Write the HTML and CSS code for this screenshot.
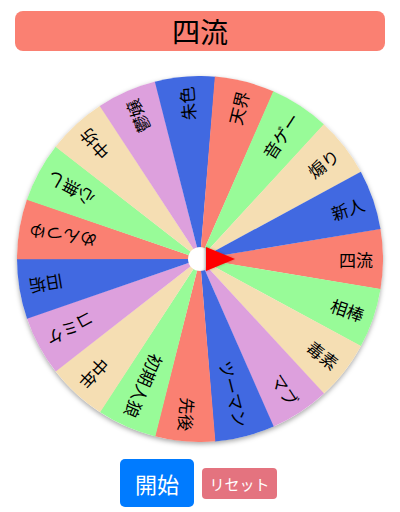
FILE: index.html
```html
<!DOCTYPE html>
<html lang="ja">
<head>
<meta charset="utf-8">
<title>ルーレット</title>
<link rel="stylesheet" href="styles.css">
</head>
<body>
<div class="result">四流</div>
<div class="wheel-area">
  <div class="wheel">
    <svg class="wheel-svg" viewBox="-183 -183 366 366" width="366" height="366">
      <defs>
        <path id="wedge" d="M0 0 L180.46 -30.36 A183 183 0 0 1 180.46 30.36 Z"/>
        <radialGradient id="hub" cx="40%" cy="50%" r="60%">
          <stop offset="0" stop-color="#ffffff"/>
          <stop offset="0.75" stop-color="#ffffff"/>
          <stop offset="1" stop-color="#d8d8d8"/>
        </radialGradient>
        <filter id="ptrshadow" x="-50%" y="-50%" width="200%" height="200%">
          <feDropShadow dx="-1" dy="0" stdDeviation="1.5" flood-color="#000" flood-opacity="0.35"/>
        </filter>
      </defs>
      <g class="segments">
        <use href="#wedge" class="c-salmon" transform="rotate(0)"/>
        <use href="#wedge" class="c-green" transform="rotate(18.947)"/>
        <use href="#wedge" class="c-wheat" transform="rotate(37.895)"/>
        <use href="#wedge" class="c-plum" transform="rotate(56.842)"/>
        <use href="#wedge" class="c-blue" transform="rotate(75.789)"/>
        <use href="#wedge" class="c-salmon" transform="rotate(94.737)"/>
        <use href="#wedge" class="c-green" transform="rotate(113.684)"/>
        <use href="#wedge" class="c-wheat" transform="rotate(132.632)"/>
        <use href="#wedge" class="c-plum" transform="rotate(151.579)"/>
        <use href="#wedge" class="c-blue" transform="rotate(170.526)"/>
        <use href="#wedge" class="c-salmon" transform="rotate(189.474)"/>
        <use href="#wedge" class="c-green" transform="rotate(208.421)"/>
        <use href="#wedge" class="c-wheat" transform="rotate(227.368)"/>
        <use href="#wedge" class="c-plum" transform="rotate(246.316)"/>
        <use href="#wedge" class="c-blue" transform="rotate(265.263)"/>
        <use href="#wedge" class="c-salmon" transform="rotate(284.211)"/>
        <use href="#wedge" class="c-green" transform="rotate(303.158)"/>
        <use href="#wedge" class="c-wheat" transform="rotate(322.105)"/>
        <use href="#wedge" class="c-blue" transform="rotate(341.053)"/>
      </g>
      <g class="labels">
        <text transform="rotate(0)" x="173" y="0">四流</text>
        <text transform="rotate(18.947)" x="173" y="0">相棒</text>
        <text transform="rotate(37.895)" x="173" y="0">毒素</text>
        <text transform="rotate(56.842)" x="173" y="0">マブ</text>
        <text transform="rotate(75.789)" x="173" y="0">ツーマン</text>
        <text transform="rotate(94.737)" x="173" y="0">先後</text>
        <text transform="rotate(113.684)" x="173" y="0">初期人狼</text>
        <text transform="rotate(132.632)" x="173" y="0">中年</text>
        <text transform="rotate(151.579)" x="173" y="0">コミケ</text>
        <text transform="rotate(170.526)" x="173" y="0">旧垢</text>
        <text transform="rotate(189.474)" x="173" y="0">めんつゆ</text>
        <text transform="rotate(208.421)" x="173" y="0">心無し</text>
        <text transform="rotate(227.368)" x="173" y="0">中坊</text>
        <text transform="rotate(246.316)" x="173" y="0">鬱嬢</text>
        <text transform="rotate(265.263)" x="173" y="0">朱色</text>
        <text transform="rotate(284.211)" x="173" y="0">天界</text>
        <text transform="rotate(303.158)" x="173" y="0">音ゲー</text>
        <text transform="rotate(322.105)" x="173" y="0">煽り</text>
        <text transform="rotate(341.053)" x="173" y="0">新人</text>
      </g>
      <circle class="hub" cx="0" cy="0" r="12"/>
      <polygon class="pointer" points="6,-12 35,0 6,12"/>
    </svg>
  </div>
</div>
<div class="controls">
  <button class="btn btn-start" type="button">開始</button>
  <button class="btn btn-reset" type="button">リセット</button>
</div>
</body>
</html>
```

FILE: styles.css
```css
html, body {
  margin: 0;
  padding: 0;
  background: #ffffff;
}

body {
  width: 400px;
  height: 512px;
  overflow: hidden;
  font-family: "Noto Sans CJK JP", "Noto Sans", sans-serif;
  color: #000;
}

.result {
  margin: 11px 15px 0;
  height: 40px;
  background: #fa8072;
  border-radius: 8px;
  display: flex;
  align-items: center;
  justify-content: center;
  font-size: 28px;
  line-height: 1;
}

.wheel-area {
  margin-top: 25px;
  display: flex;
  justify-content: center;
}

.wheel {
  width: 366px;
  height: 366px;
  border-radius: 50%;
  box-shadow: 0 2px 5px rgba(0, 0, 0, 0.35);
}

.wheel-svg {
  display: block;
}

.c-salmon { fill: #fa8072; }
.c-green { fill: #98fb98; }
.c-wheat { fill: #f5deb3; }
.c-plum { fill: #dda0dd; }
.c-blue { fill: #4169e1; }

.labels text {
  font-family: "Noto Sans CJK JP", sans-serif;
  font-size: 17px;
  fill: #000;
  text-anchor: end;
  dominant-baseline: central;
}

.hub {
  fill: url(#hub);
}

.pointer {
  fill: #ff0000;
  filter: url(#ptrshadow);
}

.controls {
  margin-top: 17px;
  padding-right: 3px;
  display: flex;
  justify-content: center;
  align-items: center;
  gap: 8px;
}

.btn {
  border: none;
  color: #fff;
  font-family: "Noto Sans CJK JP", sans-serif;
  padding: 0;
  line-height: 1;
}

.btn-start {
  width: 74px;
  height: 48px;
  background: #007bff;
  border-radius: 5px;
  font-size: 22px;
}

.btn-reset {
  width: 75px;
  height: 31px;
  background: #e4737f;
  border-radius: 4px;
  font-size: 15px;
}
```
